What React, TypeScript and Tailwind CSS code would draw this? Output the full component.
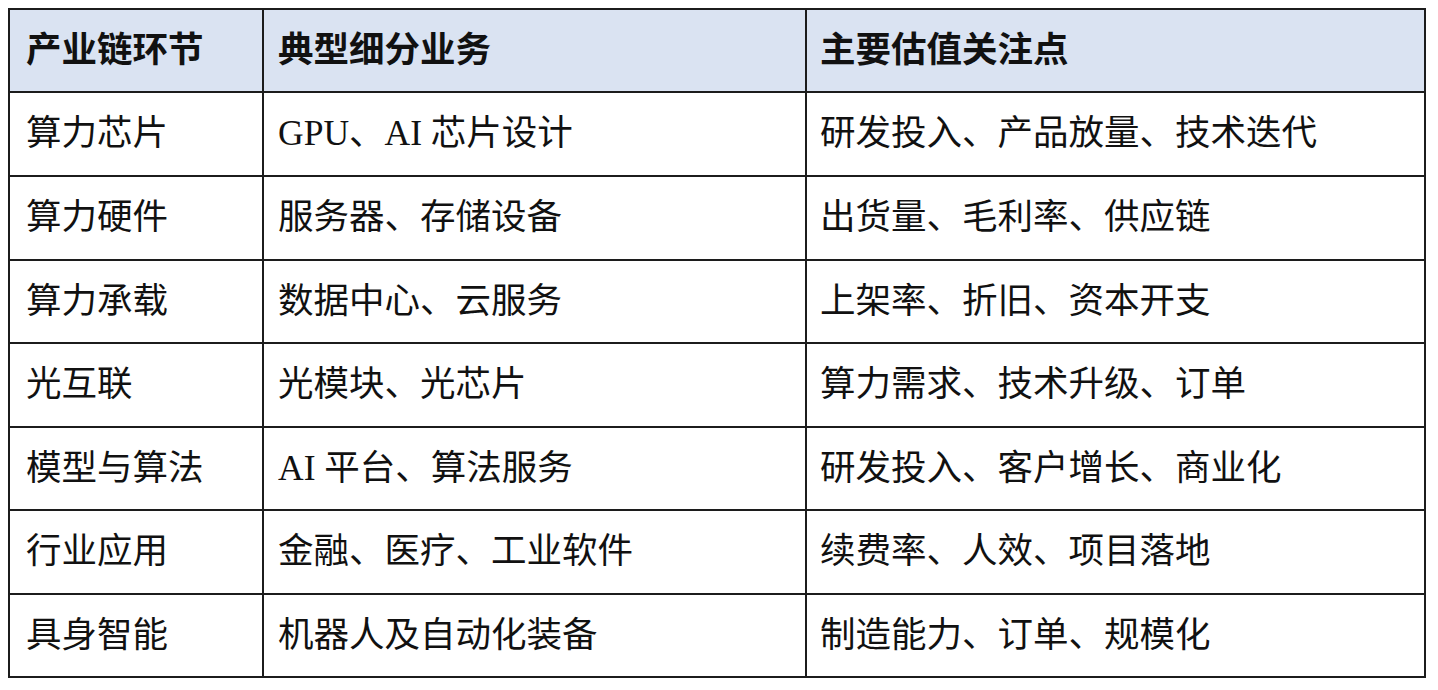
const rows: [string, string, string][] = [
  ['算力芯片', 'GPU、AI 芯片设计', '研发投入、产品放量、技术迭代'],
  ['算力硬件', '服务器、存储设备', '出货量、毛利率、供应链'],
  ['算力承载', '数据中心、云服务', '上架率、折旧、资本开支'],
  ['光互联', '光模块、光芯片', '算力需求、技术升级、订单'],
  ['模型与算法', 'AI 平台、算法服务', '研发投入、客户增长、商业化'],
  ['行业应用', '金融、医疗、工业软件', '续费率、人效、项目落地'],
  ['具身智能', '机器人及自动化装备', '制造能力、订单、规模化'],
]

const heights = ['h-[84px]', 'h-[84px]', 'h-[83px]', 'h-[84px]', 'h-[83px]', 'h-[84px]', 'h-[83px]']

export default function App() {
  return (
    <div
      className="h-[690px] w-[1438px] bg-white pl-2 pt-2 text-[#111]"
      style={{ fontFamily: '"Liberation Serif", "Noto Sans CJK SC", serif' }}
    >
      <table className="w-[1418px] table-fixed border-separate border-spacing-0 border-l-2 border-t-2 border-[#1c1c1c] text-[35.5px] leading-none">
        <colgroup>
          <col className="w-[254px]" />
          <col className="w-[543px]" />
          <col className="w-[619px]" />
        </colgroup>
        <thead>
          <tr className="h-[83px] bg-[#dae3f2]">
            <th className="border-b-2 border-r-2 border-[#1c1c1c] pl-4 text-left font-bold">产业链环节</th>
            <th className="border-b-2 border-r-2 border-[#1c1c1c] pl-[14px] text-left font-bold">典型细分业务</th>
            <th className="border-b-2 border-r-2 border-[#1c1c1c] pl-[13px] text-left font-bold">主要估值关注点</th>
          </tr>
        </thead>
        <tbody>
          {rows.map((row, i) => (
            <tr key={row[0]} className={heights[i]}>
              <td className="border-b-2 border-r-2 border-[#1c1c1c] pl-4">{row[0]}</td>
              <td className="border-b-2 border-r-2 border-[#1c1c1c] pl-[14px]">{row[1]}</td>
              <td className="border-b-2 border-r-2 border-[#1c1c1c] pl-[13px]">{row[2]}</td>
            </tr>
          ))}
        </tbody>
      </table>
    </div>
  )
}
